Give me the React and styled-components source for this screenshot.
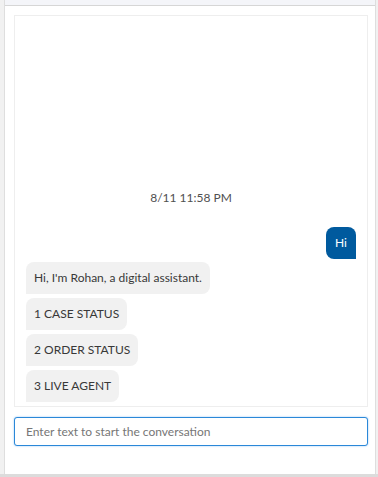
import React from 'react';
import styled, { createGlobalStyle } from 'styled-components';

const GlobalStyle = createGlobalStyle`
  html, body {
    margin: 0;
    padding: 0;
    background: #f1f1f1;
    font-family: Lato, 'Noto Sans', Arial, sans-serif;
  }
  * {
    box-sizing: border-box;
  }
`;

const Page = styled.div`
  height: 477px;
  padding: 0 2px 0 4px;
  display: flex;
  background: #f1f1f1;
  border-bottom: 3px solid #dcdcdc;
`;

const Panel = styled.div`
  flex: 1;
  display: flex;
  flex-direction: column;
  background: #fff;
  border-left: 1px solid #dedede;
  border-right: 1px solid #dedede;
`;

const TopStrip = styled.div`
  height: 6px;
  background: #f4f5f9;
  border-bottom: 1px solid #d6d6d6;
`;

const Body = styled.div`
  flex: 1;
  display: flex;
  flex-direction: column;
  padding: 9px 7px 0 9px;
`;

const Messages = styled.div`
  height: 392px;
  border: 1px solid #eeeeee;
  display: flex;
  flex-direction: column;
  justify-content: flex-end;
  padding: 0 11px 4px;
  gap: 4px;
`;

const Stamp = styled.div`
  text-align: center;
  font-size: 12px;
  color: #505050;
  line-height: 16px;
  margin-bottom: 17px;
`;

const Bubble = styled.div`
  align-self: ${(p) => (p.$mine ? 'flex-end' : 'flex-start')};
  background: ${(p) => (p.$mine ? '#005a9e' : '#f1f1f1')};
  color: ${(p) => (p.$mine ? '#fff' : '#383838')};
  font-size: 12px;
  line-height: 16px;
  padding: 8px ${(p) => (p.$mine ? '9px' : '8px')};
  border-radius: ${(p) => (p.$mine ? '8px 8px 0 8px' : '8px 8px 8px 0')};
  margin-bottom: ${(p) => (p.$mine ? '-1px' : '0')};
`;

const InputBox = styled.input`
  margin-top: 10px;
  height: 29px;
  width: 100%;
  border: 1px solid #2b88d8;
  border-radius: 3px;
  box-shadow: 0 0 2px #8cc3f5;
  padding: 0 11px;
  font-family: inherit;
  font-size: 12px;
  color: #333;
  outline: none;

  &::placeholder {
    color: #767676;
  }
`;

const options = ['1 CASE STATUS', '2 ORDER STATUS', '3 LIVE AGENT'];

export default function App() {
  return (
    <>
      <GlobalStyle />
      <Page>
        <Panel>
          <TopStrip />
          <Body>
            <Messages>
              <Stamp>8/11 11:58 PM</Stamp>
              <Bubble $mine>Hi</Bubble>
              <Bubble>Hi, I'm Rohan, a digital assistant.</Bubble>
              {options.map((o) => (
                <Bubble key={o}>{o}</Bubble>
              ))}
            </Messages>
            <InputBox placeholder="Enter text to start the conversation" />
          </Body>
        </Panel>
      </Page>
    </>
  );
}
